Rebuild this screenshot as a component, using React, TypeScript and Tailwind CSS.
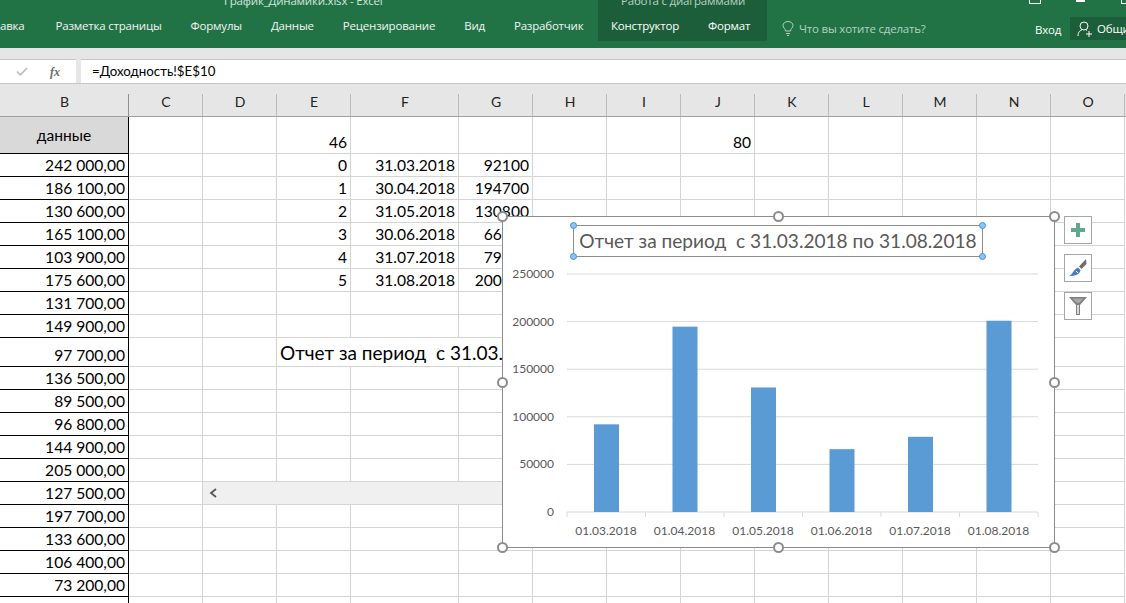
import { Check } from "lucide-react"

const columns = ["B", "C", "D", "E", "F", "G", "H", "I", "J", "K", "L", "M", "N", "O"]

const bValues = [
    "242 000,00", "186 100,00", "130 600,00", "165 100,00", "103 900,00", "175 600,00", "131 700,00", "149 900,00",
    "97 700,00", "136 500,00", "89 500,00", "96 800,00", "144 900,00", "205 000,00", "127 500,00", "197 700,00",
    "133 600,00", "106 400,00", "73 200,00", "",
]

const table = [
    ["0", "31.03.2018", "92100"],
    ["1", "30.04.2018", "194700"],
    ["2", "31.05.2018", "130800"],
    ["3", "30.06.2018", "66000"],
    ["4", "31.07.2018", "79000"],
    ["5", "31.08.2018", "200900"],
]

const chartBars = [
    { label: "01.03.2018", value: 92100 },
    { label: "01.04.2018", value: 194700 },
    { label: "01.05.2018", value: 130800 },
    { label: "01.06.2018", value: 66000 },
    { label: "01.07.2018", value: 79000 },
    { label: "01.08.2018", value: 200900 },
]

const cell = "border-r border-b border-[#d4d4d4] text-right pr-[3px] whitespace-nowrap leading-none flex items-end justify-end pb-[2px]"
const bCell = "border-r border-b border-black text-right pr-[3px] leading-none flex items-end justify-end pb-[2px]"

const Handle = ({ className }: { className: string }) => (
    <div className={`absolute w-[11px] h-[11px] rounded-full bg-white border-2 border-[#8c8c8c] ${className}`} />
)

const BlueHandle = ({ className }: { className: string }) => (
    <div className={`absolute w-[7px] h-[7px] rounded-full bg-[#8fc4f0] border border-[#3f93dc] ${className}`} />
)

const SheetRow = ({ index }: { index: number }) => {
    const data = table[index - 1]
    const c = index === 0 ? null : data
    return (
        <>
            <div className={bCell}>{bValues[index - 1]}</div>
            <div className={cell} />
            <div className={cell} />
            {index === 9 ? (
                <div className="col-span-5 border-b border-[#d4d4d4] text-[19px] leading-none whitespace-nowrap pl-[3px] pb-[4px] flex items-end">
                    Отчет за период&nbsp; с 31.03.2018 по 31.08.2018
                </div>
            ) : (
                <>
                    <div className={cell}>{c?.[0]}</div>
                    <div className={cell}>{c?.[1]}</div>
                    <div className={cell}>{c?.[2]}</div>
                    <div className={cell} />
                    <div className={cell} />
                </>
            )}
            <div className={cell} />
            <div className={cell} />
            <div className={cell} />
            <div className={cell} />
            <div className={cell} />
            <div className={cell} />
        </>
    )
}

const Chart = () => {
    const y = (v: number) => 295 - (v / 250000) * 238
    return (
        <svg width="552" height="331" className="block font-['Lato',sans-serif]">
            {[50000, 100000, 150000, 200000, 250000].map((v) => (
                <line key={v} x1="64" x2="535" y1={y(v)} y2={y(v)} stroke="#d9d9d9" />
            ))}
            {[0, 50000, 100000, 150000, 200000, 250000].map((v) => (
                <text key={v} x="51" y={y(v) + 4} textAnchor="end" fontSize="12" fill="#595959">{v}</text>
            ))}
            <line x1="64" x2="535" y1="295" y2="295" stroke="#d9d9d9" />
            {[0, 1, 2, 3, 4, 5, 6].map((i) => (
                <line key={i} x1={64 + i * 78.5} x2={64 + i * 78.5} y1="295" y2="300" stroke="#d9d9d9" />
            ))}
            {chartBars.map((b, i) => (
                <g key={b.label}>
                    <rect x={64 + i * 78.5 + 27} y={y(b.value)} width="25" height={295 - y(b.value)} fill="#5b9bd5" />
                    <text x={64 + i * 78.5 + 39} y="318" textAnchor="middle" fontSize="12" fill="#595959">{b.label}</text>
                </g>
            ))}
        </svg>
    )
}

export default function App() {
    return (
        <div className="w-[1126px] h-[603px] overflow-hidden relative bg-white text-black font-['Lato',sans-serif] text-[15.6px]">
            {/* ribbon */}
            <div className="h-[48px] bg-[#217346] flex items-start text-white text-[11.5px] tracking-[-0.2px] font-['Open_Sans',sans-serif] overflow-hidden">
                <div className="w-[598px] shrink-0">
                    <div className="h-[17px] pl-[224px] -mt-[8px] mb-[8px] text-[#d5e5dc] whitespace-nowrap">График_Динамики.xlsx - Excel</div>
                    <div className="flex gap-[29px] whitespace-nowrap text-[#f0f5f2]">
                        <span>авка</span>
                        <span className="ml-[2px]">Разметка страницы</span>
                        <span>Формулы</span>
                        <span>Данные</span>
                        <span>Рецензирование</span>
                        <span>Вид</span>
                        <span>Разработчик</span>
                    </div>
                </div>
                <div className="w-[169px] h-[41px] bg-[#1b5e39] shrink-0">
                    <div className="h-[17px] pl-[23px] -mt-[8px] mb-[8px] text-[#b9d2c4] whitespace-nowrap">Работа с диаграммами</div>
                    <div className="flex gap-[29px] pl-[13px] whitespace-nowrap">
                        <span>Конструктор</span>
                        <span>Формат</span>
                    </div>
                </div>
                <div className="flex items-center gap-[5px] pl-[15px] pt-[20px] text-[#b3d1c0] whitespace-nowrap w-[303px] shrink-0 self-start">
                    <svg width="12" height="15" viewBox="0 0 12 15" fill="none" stroke="#b3d1c0">
                        <path d="M3.500 10 C3.500 7.500 1 7 1 4.500 A5 4 0 0 1 11 4.500 C11 7 8.500 7.500 8.500 10 Z" />
                        <path d="M4 12.500 H8 M5 14.500 H7" />
                    </svg>
                    <span>Что вы хотите сделать?</span>
                </div>
                <div className="relative flex-1 self-stretch">
                    <span className="absolute left-[-35px] top-[21px] whitespace-nowrap">Вход</span>
                    <div className="absolute left-0 top-[17px] w-[56px] h-[23px] bg-[#1b5e39] flex items-center gap-[4px] pl-[7px] whitespace-nowrap">
                        <svg width="16" height="16" viewBox="0 0 16 16" fill="none" stroke="white" className="shrink-0">
                            <circle cx="7" cy="5" r="4" />
                            <path d="M1 15 C1 11 3 9.500 5 9 M9 9 L10 9.500 M12 10 V16 M9 13 H15" />
                        </svg>
                        <span>Общий</span>
                    </div>
                </div>
            </div>

            {/* window controls cut off at the top */}
            <div className="absolute left-[1029px] top-0 w-[12px] h-[4px] border border-t-0 border-white" />
            <div className="absolute left-[1076px] top-0 w-[9px] h-[2px] bg-white" />
            <div className="absolute left-[1121px] top-0 w-[5px] h-[4px] border border-t-0 border-r-0 border-white" />

            {/* formula bar */}
            <div className="h-[36px] bg-[#e6e6e6] flex pt-[11px] gap-[5px] border-b border-[#c6c6c6]">
                <div className="w-[76px] bg-white border-t border-[#c6c6c6] relative flex items-center">
                    <Check size={14} strokeWidth={3} color="#bdbdbd" className="ml-[15px]" />
                    <span className="ml-[21px] text-[12px] italic font-['Liberation_Serif',serif] text-[#6a6a6a] font-bold">fx</span>
                </div>
                <div className="flex-1 bg-white border-t border-[#c6c6c6] pl-[11px] flex items-center text-[13.3px] leading-none">
                    =Доходность!$E$10
                </div>
            </div>

            {/* column headers */}
            <div className="grid grid-cols-[129px_74px_74px_74px_108px_74px_repeat(8,74px)_auto] h-[33px] bg-[#e6e6e6] border-b border-[#a0a0a0] text-[14px] text-[#222]">
                {columns.map((col, i) => (
                    <div key={col} className="relative flex items-center justify-center pt-[2px]">
                        {col}
                        <div className={`absolute right-0 bottom-0 top-[10px] w-px ${i === 0 ? "bg-[#8f8f8f]" : "bg-[#bcbcbc]"}`} />
                    </div>
                ))}
            </div>

            {/* sheet */}
            <div className="grid grid-cols-[129px_74px_74px_74px_108px_74px_repeat(8,74px)_2px] grid-rows-[37px_repeat(8,23px)_29px_repeat(12,23px)]">
                <div className="bg-[#d9d9d9] border-r border-b border-black flex items-start justify-center pt-[11px] leading-none">данные</div>
                <div className={cell} />
                <div className={cell} />
                <div className={cell}>46</div>
                <div className={cell} />
                <div className={cell} />
                <div className={cell} />
                <div className={cell} />
                <div className={cell}>80</div>
                <div className={cell} />
                <div className={cell} />
                <div className={cell} />
                <div className={cell} />
                <div className={cell} />
                <div />
                {bValues.map((_, i) => (
                    <div key={i} className="contents">
                        <SheetRow index={i + 1} />
                        <div />
                    </div>
                ))}
            </div>

            {/* horizontal scroll strip */}
            <div className="absolute left-[203px] top-[482px] w-[299px] h-[22px] bg-[#f0f0f0] flex items-center pl-[6px]">
                <svg width="9" height="10" viewBox="0 0 9 10" fill="none" stroke="#555" strokeWidth="1.8">
                    <path d="M7 1 L2 5 L7 9" />
                </svg>
            </div>

            {/* chart */}
            <div className="absolute left-[502px] top-[216px] w-[553px] h-[332px] bg-white border border-[#8c8c8c]">
                <Chart />
                <div className="absolute left-[70px] top-[8px] w-[410px] h-[32px] border border-[#8c8c8c] flex items-center justify-center text-[#595959] text-[19.1px] whitespace-nowrap leading-none">
                    Отчет за период&nbsp; с 31.03.2018 по 31.08.2018
                </div>
                <BlueHandle className="left-[67px] top-[5px]" />
                <BlueHandle className="left-[476px] top-[5px]" />
                <BlueHandle className="left-[67px] top-[36px]" />
                <BlueHandle className="left-[476px] top-[36px]" />
            </div>
            <Handle className="left-[497px] top-[211px]" />
            <Handle className="left-[773px] top-[211px]" />
            <Handle className="left-[1049px] top-[211px]" />
            <Handle className="left-[497px] top-[377px]" />
            <Handle className="left-[1049px] top-[377px]" />
            <Handle className="left-[497px] top-[542px]" />
            <Handle className="left-[773px] top-[542px]" />
            <Handle className="left-[1049px] top-[542px]" />

            {/* chart side buttons */}
            <div className="absolute left-[1064px] top-[216px] flex flex-col gap-[10px]">
                <div className="w-[28px] h-[28px] bg-white border border-[#a6a6a6] flex items-center justify-center">
                    <svg width="14" height="14" viewBox="0 0 14 14" fill="#5fa88a">
                        <path d="M5 0 H9 V5 H14 V9 H9 V14 H5 V9 H0 V5 H5 Z" />
                    </svg>
                </div>
                <div className="w-[28px] h-[28px] bg-white border border-[#a6a6a6] flex items-center justify-center">
                    <svg width="18" height="18" viewBox="0 0 18 18">
                        <path d="M17 0 L17.500 5 L12.500 10 L10 7.500 Z" fill="#6e6e6e" />
                        <path d="M9 8.500 L11.500 11 C11 15 7 17 0 17 C4 15 4 11 9 8.500 Z" fill="#4a7ebb" />
                        <path d="M7 12 L9 14" stroke="white" strokeWidth="1" />
                    </svg>
                </div>
                <div className="w-[28px] h-[28px] bg-white border border-[#a6a6a6] flex items-center justify-center">
                    <svg width="18" height="18" viewBox="0 0 18 18" fill="#7f7f7f">
                        <path d="M0 0 H18 L11 8 V18 H7 V8 Z" />
                        <path d="M3.500 1.500 H14.500 L10 6 H8 Z" fill="#a8a8a8" />
                        <rect x="8.300" y="8" width="1.400" height="9" fill="white" />
                    </svg>
                </div>
            </div>
        </div>
    )
}
